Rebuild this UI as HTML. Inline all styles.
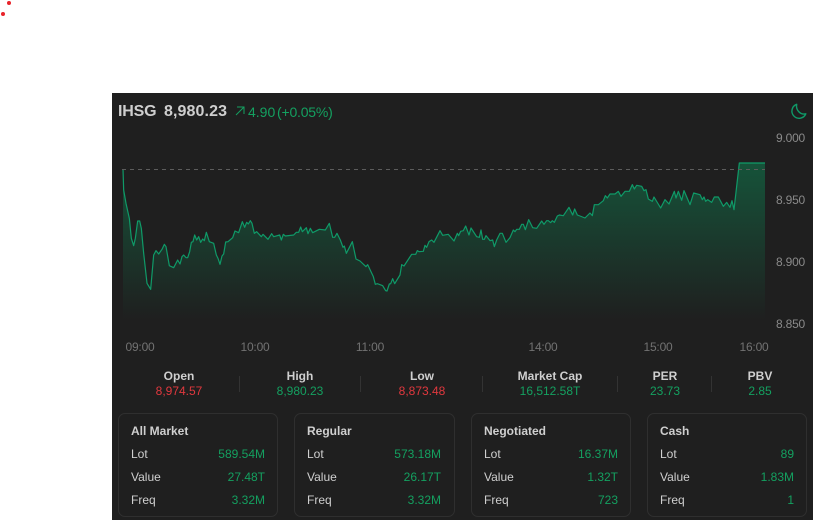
<!DOCTYPE html>
<html>
<head>
<meta charset="utf-8">
<style>
html,body{margin:0;padding:0;width:813px;height:520px;background:#fff;overflow:hidden}
body{position:relative;font-family:"Liberation Sans",sans-serif;font-size:12px}
#p{position:absolute;left:112px;top:93px;width:701px;height:427px;background:#1f1f1f}
.t{position:absolute;white-space:nowrap;line-height:16px;height:16px}
.c{transform:translateX(-50%)}
.r{transform:translateX(-100%)}
.g{color:#14a060}.d{color:#e0383e}.w{color:#cfcfcf}.m{color:#727272;letter-spacing:-.2px}.a{color:#8a8a8a}
.b{font-weight:bold;color:#cfcfcf}
.card{position:absolute;top:413px;height:102px;border:1px solid #2f2f2f;border-radius:7px;box-sizing:content-box}
.dv{position:absolute;top:376px;width:1px;height:16px;background:#333}
.dot{position:absolute;width:4px;height:4px;border-radius:50%;background:#e8232a}
</style>
</head>
<body>
<div class="dot" style="left:7px;top:1px"></div>
<div class="dot" style="left:1px;top:12px"></div>
<div id="p"></div>

<svg style="position:absolute;left:0;top:0" width="813" height="520" viewBox="0 0 813 520">
<defs>
<linearGradient id="ar" x1="0" y1="0" x2="0" y2="1">
<stop offset="0" stop-color="#10734a" stop-opacity=".62"/>
<stop offset="1" stop-color="#10734a" stop-opacity="0"/>
</linearGradient>
</defs>
<g transform="translate(112 190) scale(.33333)">
<polygon fill="url(#ar)" points="33,390 33,-63 35,0 42,40 52,85 58,145 65,167 70,145 77,93 83,93 88,115 95,190 105,280 116,298 125,195 132,182 140,192 150,178 157,163 162,170 172,227 185,233 197,210 204,222 210,200 215,195 222,203 227,203 233,185 238,157 243,155 248,135 254,150 260,140 266,157 272,147 277,152 283,127 292,155 305,160 313,195 318,205 324,223 330,198 335,192 341,156 348,155 362,143 369,123 380,128 391,95 398,112 404,97 409,102 415,92 420,100 427,130 434,125 448,140 453,133 468,148 479,131 485,140 503,135 508,150 514,133 520,138 545,135 553,127 560,127 566,111 571,125 583,113 588,131 595,115 602,128 622,118 640,120 652,100 662,142 668,142 675,130 685,150 693,172 697,168 703,190 721,155 732,207 744,213 762,230 767,224 784,260 790,283 796,281 812,287 821,302 825,303 832,282 836,281 842,266 848,281 864,255 869,224 876,228 899,193 911,193 916,182 921,185 934,184 939,166 944,172 951,155 959,150 966,157 984,122 992,136 1009,133 1026,153 1036,130 1040,137 1046,124 1054,122 1061,108 1071,135 1077,114 1094,140 1102,142 1107,120 1112,148 1117,148 1122,137 1134,152 1142,150 1147,170 1154,150 1164,130 1171,130 1182,157 1194,143 1204,120 1209,125 1214,118 1222,118 1229,103 1234,103 1240,119 1250,89 1262,113 1274,115 1289,93 1296,103 1304,92 1309,92 1316,98 1321,92 1327,97 1336,78 1342,75 1354,77 1371,52 1382,75 1388,57 1396,75 1404,78 1419,84 1434,69 1441,77 1447,44 1459,44 1474,32 1480,17 1486,24 1494,12 1509,12 1519,4 1527,19 1539,4 1552,4 1561,-16 1567,-3 1574,-14 1589,-11 1596,2 1602,-1 1609,27 1621,34 1626,21 1646,54 1659,29 1671,42 1687,4 1692,24 1699,4 1709,31 1716,2 1734,44 1745,9 1764,14 1771,29 1776,21 1781,34 1787,29 1799,37 1807,21 1819,21 1834,49 1844,37 1854,52 1860,32 1866,59 1882,-81 1959,-81 1959,390"/>
<polyline fill="none" stroke="#0f9a68" stroke-width="3.6" stroke-linejoin="round" points="33,-63 35,0 42,40 52,85 58,145 65,167 70,145 77,93 83,93 88,115 95,190 105,280 116,298 125,195 132,182 140,192 150,178 157,163 162,170 172,227 185,233 197,210 204,222 210,200 215,195 222,203 227,203 233,185 238,157 243,155 248,135 254,150 260,140 266,157 272,147 277,152 283,127 292,155 305,160 313,195 318,205 324,223 330,198 335,192 341,156 348,155 362,143 369,123 380,128 391,95 398,112 404,97 409,102 415,92 420,100 427,130 434,125 448,140 453,133 468,148 479,131 485,140 503,135 508,150 514,133 520,138 545,135 553,127 560,127 566,111 571,125 583,113 588,131 595,115 602,128 622,118 640,120 652,100 662,142 668,142 675,130 685,150 693,172 697,168 703,190 721,155 732,207 744,213 762,230 767,224 784,260 790,283 796,281 812,287 821,302 825,303 832,282 836,281 842,266 848,281 864,255 869,224 876,228 899,193 911,193 916,182 921,185 934,184 939,166 944,172 951,155 959,150 966,157 984,122 992,136 1009,133 1026,153 1036,130 1040,137 1046,124 1054,122 1061,108 1071,135 1077,114 1094,140 1102,142 1107,120 1112,148 1117,148 1122,137 1134,152 1142,150 1147,170 1154,150 1164,130 1171,130 1182,157 1194,143 1204,120 1209,125 1214,118 1222,118 1229,103 1234,103 1240,119 1250,89 1262,113 1274,115 1289,93 1296,103 1304,92 1309,92 1316,98 1321,92 1327,97 1336,78 1342,75 1354,77 1371,52 1382,75 1388,57 1396,75 1404,78 1419,84 1434,69 1441,77 1447,44 1459,44 1474,32 1480,17 1486,24 1494,12 1509,12 1519,4 1527,19 1539,4 1552,4 1561,-16 1567,-3 1574,-14 1589,-11 1596,2 1602,-1 1609,27 1621,34 1626,21 1646,54 1659,29 1671,42 1687,4 1692,24 1699,4 1709,31 1716,2 1734,44 1745,9 1764,14 1771,29 1776,21 1781,34 1787,29 1799,37 1807,21 1819,21 1834,49 1844,37 1854,52 1860,32 1866,59 1882,-81 1959,-81"/>
</g>
<line x1="122" y1="169.5" x2="765" y2="169.5" stroke="#5c5c5c" stroke-width="1" stroke-dasharray="4 4"/>
<path d="M236 115L244 107M237 107H244V114" fill="none" stroke="#14a060" stroke-width="1"/>
<path d="M796.7 104.3A7.2 7.2 0 1 0 805.8 113.8C800.5 115.2 795.5 110 796.7 104.3Z" fill="none" stroke="#0f9a68" stroke-width="1.4" stroke-linejoin="round"/>
</svg>

<div class="t b" style="left:118px;top:104px;font-size:16px;letter-spacing:-.2px">IHSG</div>
<div class="t b" style="left:164px;top:104px;font-size:16px;letter-spacing:.1px">8,980.23</div>
<div class="t g" style="left:248px;top:104px;font-size:14px">4.90</div>
<div class="t g" style="left:277px;top:104px;font-size:14px;letter-spacing:-.2px">(+0.05%)</div>

<div class="t a" style="left:776px;top:130px;letter-spacing:-.2px">9.000</div>
<div class="t a" style="left:776px;top:192px;letter-spacing:-.2px">8.950</div>
<div class="t a" style="left:776px;top:254px;letter-spacing:-.2px">8.900</div>
<div class="t a" style="left:776px;top:316px;letter-spacing:-.2px">8.850</div>

<div class="t m c" style="left:140px;top:339px">09:00</div>
<div class="t m c" style="left:255px;top:339px">10:00</div>
<div class="t m c" style="left:370px;top:339px">11:00</div>
<div class="t m c" style="left:543px;top:339px">14:00</div>
<div class="t m c" style="left:658px;top:339px">15:00</div>
<div class="t m c" style="left:754px;top:339px">16:00</div>

<div class="t b c" style="left:179px;top:368px">Open</div>
<div class="t d c" style="left:179px;top:383px">8,974.57</div>
<div class="t b c" style="left:300px;top:368px">High</div>
<div class="t g c" style="left:300px;top:383px">8,980.23</div>
<div class="t b c" style="left:422px;top:368px">Low</div>
<div class="t d c" style="left:422px;top:383px">8,873.48</div>
<div class="t b c" style="left:550px;top:368px">Market Cap</div>
<div class="t g c" style="left:550px;top:383px">16,512.58T</div>
<div class="t b c" style="left:665px;top:368px">PER</div>
<div class="t g c" style="left:665px;top:383px">23.73</div>
<div class="t b c" style="left:760px;top:368px">PBV</div>
<div class="t g c" style="left:760px;top:383px">2.85</div>
<div class="dv" style="left:239px"></div>
<div class="dv" style="left:360px"></div>
<div class="dv" style="left:482px"></div>
<div class="dv" style="left:617px"></div>
<div class="dv" style="left:711px"></div>

<div class="card" style="left:118px;width:158px"></div>
<div class="t b" style="left:131px;top:423px">All Market</div>
<div class="t w" style="left:131px;top:446px">Lot</div><div class="t g r" style="left:265px;top:446px">589.54M</div>
<div class="t w" style="left:131px;top:469px">Value</div><div class="t g r" style="left:265px;top:469px">27.48T</div>
<div class="t w" style="left:131px;top:492px">Freq</div><div class="t g r" style="left:265px;top:492px">3.32M</div>

<div class="card" style="left:294px;width:159px"></div>
<div class="t b" style="left:307px;top:423px">Regular</div>
<div class="t w" style="left:307px;top:446px">Lot</div><div class="t g r" style="left:441px;top:446px">573.18M</div>
<div class="t w" style="left:307px;top:469px">Value</div><div class="t g r" style="left:441px;top:469px">26.17T</div>
<div class="t w" style="left:307px;top:492px">Freq</div><div class="t g r" style="left:441px;top:492px">3.32M</div>

<div class="card" style="left:471px;width:158px"></div>
<div class="t b" style="left:484px;top:423px">Negotiated</div>
<div class="t w" style="left:484px;top:446px">Lot</div><div class="t g r" style="left:618px;top:446px">16.37M</div>
<div class="t w" style="left:484px;top:469px">Value</div><div class="t g r" style="left:618px;top:469px">1.32T</div>
<div class="t w" style="left:484px;top:492px">Freq</div><div class="t g r" style="left:618px;top:492px">723</div>

<div class="card" style="left:647px;width:158px"></div>
<div class="t b" style="left:660px;top:423px">Cash</div>
<div class="t w" style="left:660px;top:446px">Lot</div><div class="t g r" style="left:794px;top:446px">89</div>
<div class="t w" style="left:660px;top:469px">Value</div><div class="t g r" style="left:794px;top:469px">1.83M</div>
<div class="t w" style="left:660px;top:492px">Freq</div><div class="t g r" style="left:794px;top:492px">1</div>
</body>
</html>
